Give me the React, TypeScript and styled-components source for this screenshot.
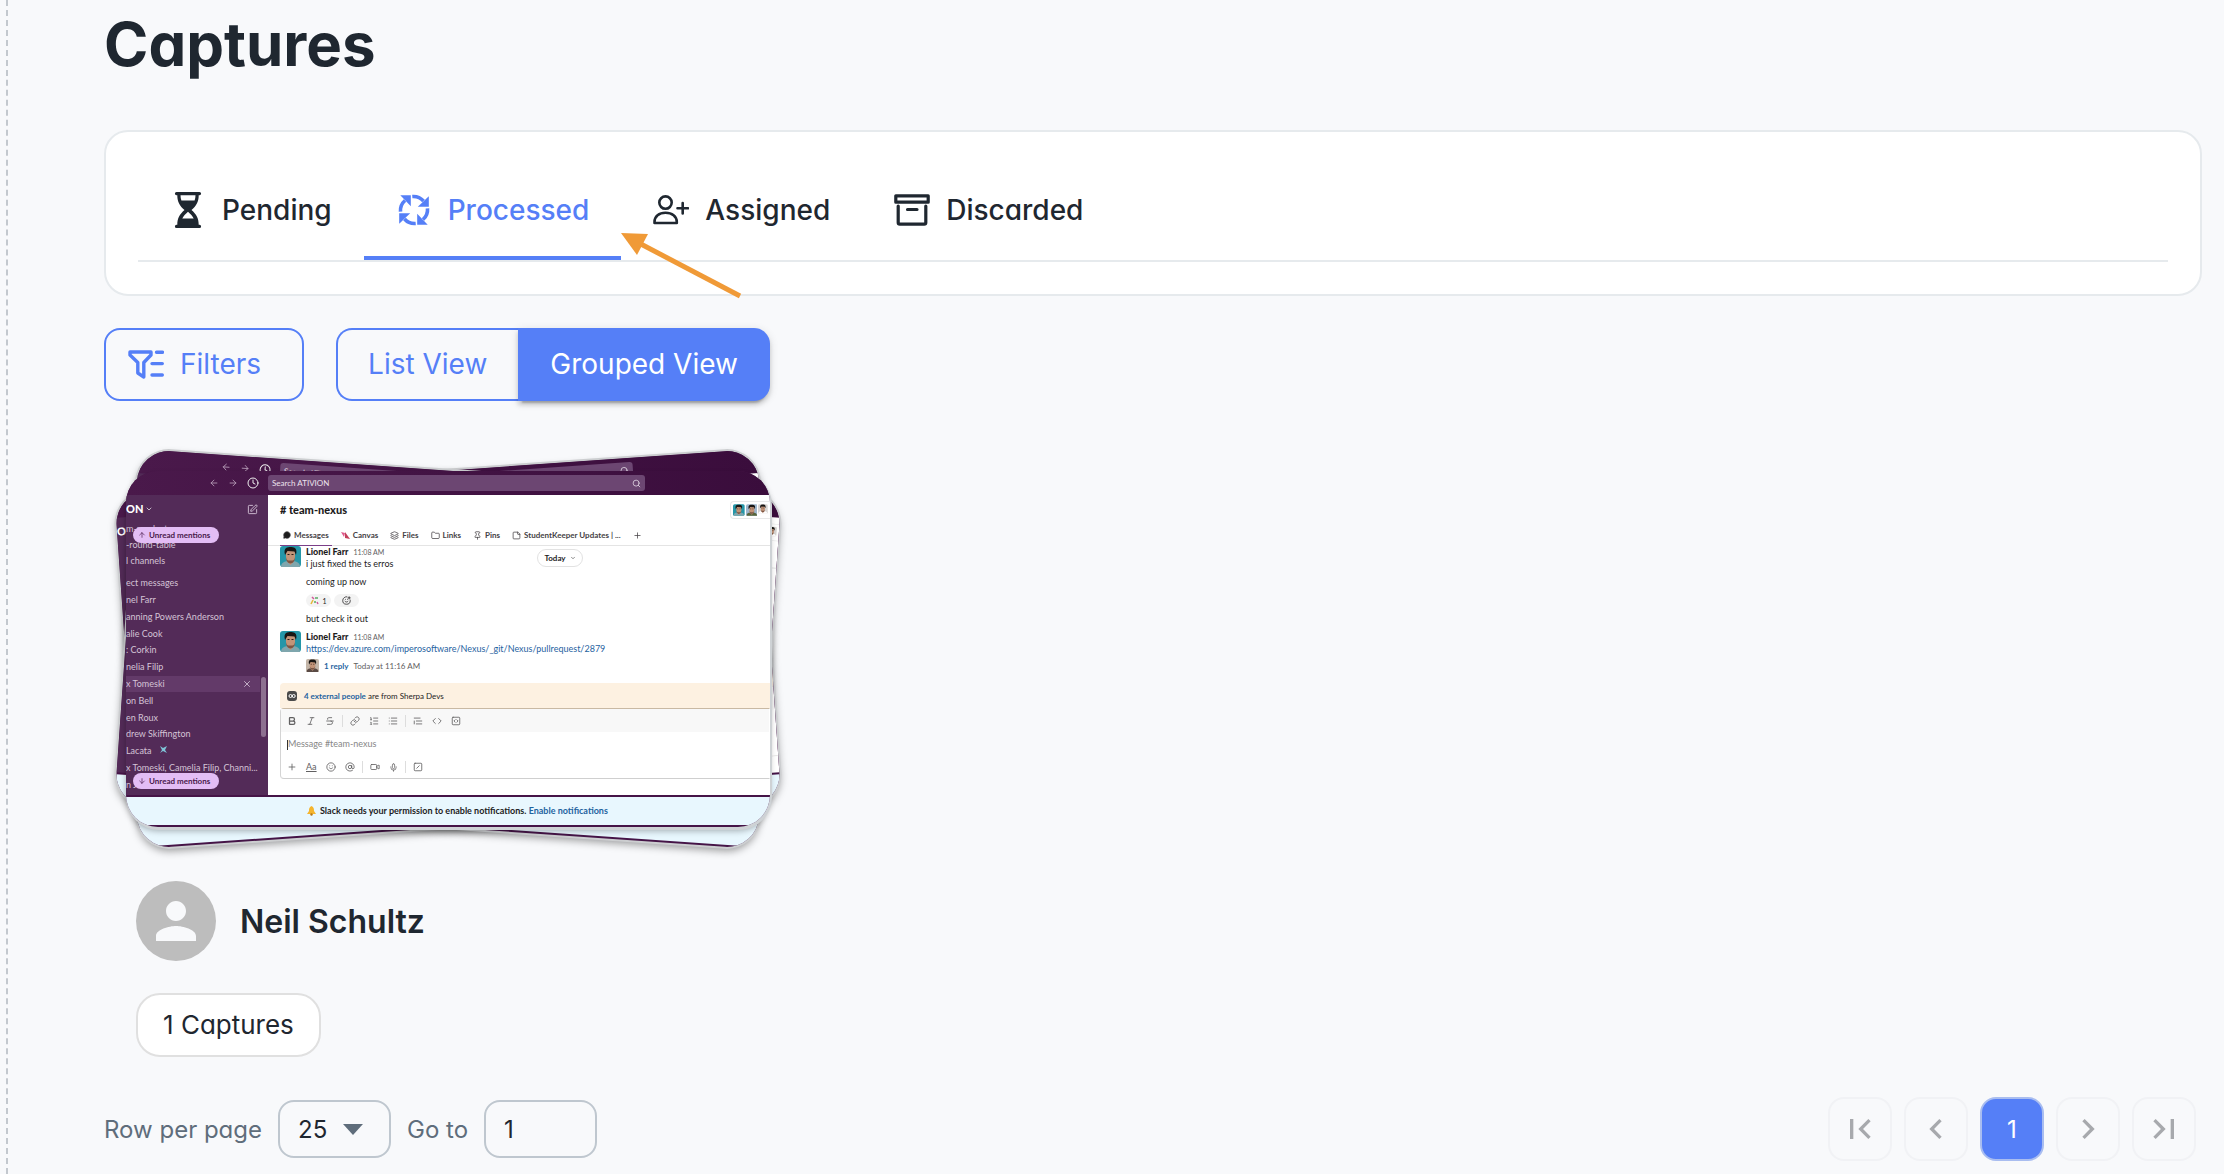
import React from "react";
import styled, { createGlobalStyle, css } from "styled-components";
import { MdPerson, MdFirstPage, MdLastPage, MdChevronLeft, MdChevronRight } from "react-icons/md";
import {
  ArrowLeft, ArrowRight, Clock, Search, SquarePen, ChevronDown, X, Layers, Folder, Pin, StickyNote, Plus,
  SmilePlus, Bold, Italic, Strikethrough, Link, ListOrdered, List, TextQuote, Code, SquareCode, Smile, AtSign,
  Video, Mic, SquareSlash, ArrowUp, ArrowDown, MessageCircle,
} from "lucide-react";

const BLUE = "#557ff7";
const INK = "#1f2730";
const LINE = "#e6eaed";

const Global = createGlobalStyle`
  * { box-sizing: border-box; }
  body { margin: 0; background: #f8f9fb; }
  button, input, select { font: inherit; color: inherit; }
`;

const Page = styled.main`
  min-height: 100vh;
  margin-left: 6px;
  padding: 8px 22px 12px 96px;
  border-left: 2px dashed #c3c8ce;
  color: ${INK};
  font-family: Inter, "Liberation Sans", sans-serif;
  font-feature-settings: "cv11";
  overflow: hidden;
`;

const Title = styled.h1`
  margin: 0 0 50px;
  font-size: 60px;
  line-height: 72px;
  font-weight: 700;
`;

const Card = styled.section`
  position: relative;
  padding: 32px;
  background: #fff;
  border: 2px solid ${LINE};
  border-radius: 24px;
`;

const Tabs = styled.div`
  display: flex;
  border-bottom: 2px solid ${LINE};
`;

const Tab = styled.button<{ $active?: boolean }>`
  display: flex;
  align-items: center;
  gap: 16px;
  height: 96px;
  padding: 0 32px;
  background: none;
  border: 0;
  border-bottom: 4px solid ${(p) => (p.$active ? BLUE : "transparent")};
  color: ${(p) => (p.$active ? BLUE : INK)};
  font-size: 28px;
  font-weight: 500;
`;

const Pointer = styled.svg`
  position: absolute;
  left: 513px;
  top: 97px;
  overflow: visible;
`;

const Toolbar = styled.div`
  display: flex;
  gap: 32px;
  margin-top: 32px;
`;

const outline = css`
  height: 73px;
  border: 2px solid ${BLUE};
  background: transparent;
  color: ${BLUE};
  font-size: 28px;
  font-weight: 400;
`;

const FilterButton = styled.button`
  ${outline}
  display: flex;
  align-items: center;
  gap: 16px;
  padding: 0 41px 2px 22px;
  border-radius: 16px;
`;

const Segments = styled.div`
  display: flex;
`;

const Segment = styled.button<{ $active?: boolean }>`
  ${outline}
  padding: 0 31px 2px 30px;
  border-radius: 16px 0 0 16px;
  border-right: 0;
  ${(p) =>
    p.$active &&
    css`
      padding: 0 32px 2px;
      border: 0;
      border-radius: 0 16px 16px 0;
      background: ${BLUE};
      color: #fff;
      box-shadow: 0 6px 2px -4px rgba(0, 0, 0, 0.2), 0 4px 4px rgba(0, 0, 0, 0.14), 0 2px 10px rgba(0, 0, 0, 0.12);
    `}
`;

const Stack = styled.div`
  position: relative;
  width: 644px;
  height: 356px;
  margin: 70px 0 54px 22px;
`;

const Shot = styled.div<{ $turn?: number }>`
  position: absolute;
  inset: 0;
  overflow: hidden;
  display: flex;
  flex-direction: column;
  border-radius: 32px;
  background: #451447;
  font-family: Lato, "Liberation Sans", sans-serif;
  font-size: 9px;
  line-height: 12px;
  color: #1d1c1d;
  white-space: nowrap;
  box-shadow: ${(p) => (p.$turn ? "0 0 0 2px #ccced0, 0 4px 8px rgba(0,0,0,.4)" : "1px 2px 0 1px #ced2d5, 0 4px 6px rgba(0,0,0,.3)")};
  transform: ${(p) => (p.$turn ? `rotate(${p.$turn}deg)` : "none")};
`;

const TopBar = styled.div`
  display: flex;
  align-items: center;
  height: 24px;
  padding-left: 83px;
  background: linear-gradient(90deg, #4a194b, #3a0d3c);
  color: #b9a0ba;
`;

const NavIcons = styled.div`
  display: flex;
  align-items: center;
  gap: 9px;
  width: 59px;
`;

const SearchBox = styled.div`
  display: flex;
  align-items: center;
  justify-content: space-between;
  width: 377px;
  height: 16px;
  padding: 0 4px;
  border-radius: 3px;
  background: #6c4672;
  color: #ece2ed;
  font-size: 8px;
`;

const Body = styled.div`
  display: flex;
  flex: 1;
  min-height: 0;
`;

const Side = styled.div`
  position: relative;
  flex-shrink: 0;
  width: 142px;
  background: #532b58;
  color: #d4c3d6;
`;

const SideHead = styled.div`
  display: flex;
  align-items: center;
  justify-content: space-between;
  height: 28px;
  padding: 0 10px 0 0;
  color: #fff;
  font-size: 11px;
  font-weight: 900;
`;

const SideName = styled.span`
  display: flex;
  align-items: center;
  gap: 2px;
`;

const Channels = styled.div`
  display: flex;
  flex-direction: column;
  gap: 4px;
  height: 52px;
`;

const People = styled.div`
  display: grid;
  grid-template-columns: minmax(0, 1fr);
  grid-auto-rows: 1fr;
  height: 218px;
`;

const Person = styled.div<{ $active?: boolean }>`
  display: flex;
  align-items: center;
  justify-content: space-between;
  margin-right: 8px;
  padding-right: 8px;
  background: ${(p) => (p.$active ? "#633a69" : "none")};
`;

const Scroll = styled.i`
  position: absolute;
  right: 2px;
  top: 182px;
  width: 5px;
  height: 60px;
  border-radius: 3px;
  background: #8d7090;
`;

const Unread = styled.div<{ $bottom?: boolean }>`
  position: absolute;
  left: 7px;
  ${(p) => (p.$bottom ? "bottom: 6px;" : "top: 32px;")}
  display: flex;
  align-items: center;
  gap: 3px;
  width: 86px;
  height: 16px;
  padding: 0 5px;
  border-radius: 8px;
  background: #e3bdf5;
  color: #48194b;
  font-size: 8px;
  font-weight: 700;
`;

const Main = styled.div`
  display: flex;
  flex-direction: column;
  flex: 1;
  min-width: 0;
  background: #fff;
`;

const MainHead = styled.div`
  display: flex;
  align-items: center;
  justify-content: space-between;
  height: 30px;
  padding-left: 12px;
  font-size: 11px;
  font-weight: 900;
`;

const Members = styled.div`
  display: flex;
  gap: 1px;
  width: 40px;
  padding: 2px;
  border: 1px solid #e8e8e8;
  border-right: 0;
  border-radius: 4px 0 0 4px;
`;

const TabRow = styled.div`
  display: flex;
  gap: 6px;
  height: 21px;
  padding-left: 12px;
  border-bottom: 1px solid #e4e4e4;
  color: #454245;
  font-size: 8px;
  font-weight: 700;
`;

const ShotTab = styled.span<{ $active?: boolean }>`
  display: flex;
  align-items: center;
  gap: 3px;
  height: 21px;
  padding: 0 3px;
  border-bottom: 1px solid ${(p) => (p.$active ? "#7b3f88" : "transparent")};
`;

const Feed = styled.div`
  position: relative;
  flex: 1;
  padding-left: 12px;
`;

const Today = styled.div`
  position: absolute;
  left: 269px;
  top: 3px;
  display: flex;
  align-items: center;
  justify-content: center;
  gap: 4px;
  width: 46px;
  height: 18px;
  border: 1px solid #e2e2e2;
  border-radius: 9px;
  background: #fff;
  font-size: 8px;
  font-weight: 700;
`;

const Message = styled.div`
  display: flex;
  gap: 5px;
`;

const Lines = styled.div`
  display: flex;
  flex-direction: column;
`;

const Author = styled.div`
  height: 12px;
  font-weight: 900;
`;

const Time = styled.span`
  margin-left: 5px;
  color: #616061;
  font-size: 7px;
  font-weight: 400;
`;

const Text = styled.div`
  height: 18px;
`;

const Reactions = styled.div`
  display: flex;
  gap: 3px;
  margin: 0 0 6px;
`;

const Reaction = styled.span`
  display: flex;
  align-items: center;
  justify-content: center;
  gap: 3px;
  width: 25px;
  height: 13px;
  border-radius: 7px;
  background: #f3f3f3;
  font-size: 7px;
`;

const Blue = styled.span`
  color: #1f639f;
`;

const Reply = styled.div`
  display: flex;
  align-items: center;
  gap: 5px;
  margin-top: -2px;
  font-size: 8px;
  color: #616061;
`;

const Notice = styled.div`
  display: flex;
  align-items: center;
  gap: 7px;
  height: 25px;
  margin-left: 12px;
  padding-left: 7px;
  border-radius: 4px 0 0 0;
  background: #fdf1e1;
  font-size: 8px;
`;

const Composer = styled.div`
  height: 71px;
  margin: 0 0 16px 12px;
  border: 1px solid;
  border-color: #c9b9a3 transparent #cfcfcf #d4d4d4;
  border-radius: 4px 0 0 4px;
  color: #616061;
`;

const Tools = styled.div<{ $bar?: boolean }>`
  display: flex;
  align-items: center;
  gap: 9px;
  height: ${(p) => (p.$bar ? 23 : 22)}px;
  padding-left: 6px;
  background: ${(p) => (p.$bar ? "#f8f8f8" : "none")};
`;

const Rule = styled.i`
  width: 1px;
  height: 12px;
  margin: 0 -2px;
  background: #ddd;
`;

const Draft = styled.div`
  height: 24px;
  margin-left: 6px;
  padding: 6px 0 0;
  color: #868686;
`;

const Caret = styled.i`
  display: inline-block;
  width: 1px;
  height: 10px;
  vertical-align: middle;
  background: #333;
`;

const Permission = styled.div`
  display: flex;
  align-items: center;
  gap: 4px;
  height: 28px;
  margin: 2px 0;
  padding-left: 181px;
  background: #e8f7fe;
  font-weight: 700;
  font-size: 9px;
`;

const Owner = styled.div`
  display: flex;
  align-items: center;
  gap: 24px;
  padding-left: 32px;
  font-size: 32px;
  font-weight: 600;
`;

const Avatar = styled.span`
  display: grid;
  place-items: center;
  width: 80px;
  height: 80px;
  border-radius: 50%;
  background: #bdbdbd;
  color: #f8f9fb;
`;

const Count = styled.div`
  display: flex;
  align-items: center;
  width: fit-content;
  height: 64px;
  margin: 32px 0 40px 32px;
  padding: 0 25px 2px;
  border: 2px solid #e0e0e0;
  border-radius: 24px;
  background: #fff;
  font-size: 26px;
`;

const Footer = styled.footer`
  display: flex;
  align-items: center;
  gap: 16px;
  padding-right: 6px;
  color: #5f6d7b;
  font-size: 24px;
`;

const field = css`
  height: 58px;
  border: 2px solid #bfc7cf;
  border-radius: 16px;
  background: transparent;
  color: ${INK};
  outline: 0;
`;

const SelectWrap = styled.span`
  display: grid;
  align-items: center;
  & > * {
    grid-area: 1 / 1;
  }
  & > svg {
    justify-self: end;
    margin-right: 28px;
    pointer-events: none;
  }
`;

const Select = styled.select`
  ${field}
  width: 113px;
  padding: 0 18px;
  appearance: none;
`;

const PageInput = styled.input`
  ${field}
  width: 113px;
  padding: 0 18px;
`;

const Pager = styled.nav`
  display: flex;
  gap: 12px;
  margin-left: auto;
`;

const PageButton = styled.button<{ $active?: boolean }>`
  display: grid;
  place-items: center;
  width: 64px;
  height: 64px;
  padding: 0;
  border: 2px solid ${(p) => (p.$active ? "#a9bdf0" : "#f1f2f5")};
  border-radius: 16px;
  background: ${(p) => (p.$active ? BLUE : "transparent")};
  color: ${(p) => (p.$active ? "#fff" : "#a7a9ad")};
`;

const Hourglass = () => (
  <svg width="36" height="36" viewBox="0 0 36 36">
    <path d="M6.5 0h23a1.6 1.6 0 0 1 0 3.2h-.8c0 6.8-2.4 10.6-7.2 14.8 4.8 4.2 7.2 8 7.2 14.8h.8a1.6 1.6 0 0 1 0 3.200h-23a1.600 1.600 0 0 1 0-3.200h.8c0-6.800 2.400-10.600 7.200-14.800-4.800-4.200-7.200-8-7.200-14.800h-.8a1.600 1.600 0 0 1 0-3.200z" fill="currentColor" />
    <path d="M10.500 3.200h15c0 2-.3 3.800-.9 5.300H11.400c-.6-1.500-.9-3.300-.9-5.300zM18 19.800c2.600 2.200 4.500 4.200 5.700 6.700H12.300c1.200-2.500 3.100-4.500 5.700-6.700z" fill="#fff" />
  </svg>
);

const Cycle = () => (
  <svg width="36" height="36" viewBox="0 0 36 36" fill="currentColor">
    {[0, 90, 180, 270].map((a) => (
      <g key={a} transform={`rotate(${a} 18 18)`}>
        <path d="M16.300 4.500A13.500 13.500 0 0 1 27.500 9" fill="none" stroke="currentColor" strokeWidth="3.600" />
        <path d="M32.800 4.300v10.500h-11z" />
      </g>
    ))}
  </svg>
);

const UserPlus = () => (
  <svg width="36" height="36" viewBox="0 0 36 36" fill="none" stroke="currentColor" strokeWidth="2.600" strokeLinecap="round" strokeLinejoin="round">
    <circle cx="12.500" cy="10.600" r="6.200" />
    <path d="M1.500 31v-1c0-5.500 4.500-9.200 11-9.200s11.300 3.700 11.300 9.200v1zM29.700 11v10.500M24.500 16.200H35" />
  </svg>
);

const Archive = () => (
  <svg width="36" height="36" viewBox="0 0 36 36" fill="none" stroke="currentColor" strokeWidth="3.200" strokeLinecap="round" strokeLinejoin="round">
    <path d="M1.800 3.800h32.400v6.400H1.800zM4.200 14v16.500c0 1 .6 1.600 1.600 1.600h24.400c1 0 1.600-.6 1.600-1.600V14M13.500 17.500h9.500" />
  </svg>
);

const Funnel = () => (
  <svg width="36" height="36" viewBox="0 0 36 36" fill="none" stroke="currentColor" strokeWidth="3.400" strokeLinecap="round" strokeLinejoin="round">
    <path d="M2 6h21v3l-7.200 7.500V31L9.800 27V16.500L2 9z" />
    <path d="M28.500 6.300h6M24 17.600h10.300M24 29h10.300" />
  </svg>
);

const Face = ({ size, bg = "#2596a8", shirt = "#7fa6ad" }: { size: number; bg?: string; shirt?: string }) => (
  <svg width={size} height={size} viewBox="0 0 21 21">
    <rect width="21" height="21" rx="3" fill={bg} />
    <path fill={shirt} d="M1 21c0-5 4-6 9.500-6s9.500 1 9.500 6z" />
    <path fill="#c39478" d="M6 7c0-6 9-6 9 0v4c0 3-1.500 4.500-2 5.500L10.500 19 8 16.500C7.500 15.500 6 14 6 11z" />
    <path fill="#191614" d="M5 9C3 1 8 1 10.500 1S18 1 16 9l-1.500-3.500-7-.5z" />
    <path fill="#7c5644" d="M6 11.500c0 3 2 6 4.500 6s4.500-3 4.500-6c-.5 2-1.500 3-2.500 3h-4c-1 0-2-1-2.500-3z" />
    <path stroke="#2a1a14" strokeWidth="1" d="M7.500 8.500h2m2 0h2" />
  </svg>
);

const Confetti = () => (
  <svg width="9" height="9" viewBox="0 0 9 9" strokeWidth="1.500">
    <path stroke="#e6b93a" d="M1 8l2-4" />
    <path stroke="#d4589b" d="M2 1l2 2m3 3l1 2" />
    <path stroke="#58ab66" d="M5 2h3M4 6h2" />
  </svg>
);

const people = ["nel Farr", "anning Powers Anderson", "alie Cook", ": Corkin", "nelia Filip", "x Tomeski", "on Bell", "en Roux", "drew Skiffington", " Lacata", "x Tomeski, Camelia Filip, Channi...", "n J"];

function Workspace({ turn }: { turn?: number }) {
  const front = !turn;
  return (
    <Shot $turn={turn} aria-hidden={!front}>
      <TopBar>
        <NavIcons>
          <ArrowLeft size={10} />
          <ArrowRight size={10} />
          <Clock size={12} color="#eee" />
        </NavIcons>
        <SearchBox>
          <span>Search ATIVION</span>
          <Search size={9} />
        </SearchBox>
      </TopBar>
      <Body>
        <Side>
          <SideHead>
            <SideName>ON <ChevronDown size={8} /></SideName>
            <SquarePen size={11} color="#d4c3d6" />
          </SideHead>
          {front && (
            <Channels>
              <span>m-product</span>
              <span>-round-table</span>
              <span>l channels</span>
            </Channels>
          )}
          {front && (
            <People>
              <Person>ect messages</Person>
              {people.map((p, i) => (
                <Person key={p} $active={i === 5}>
                  <span>
                    {p}
                    {i === 9 && <svg width="18" height="9" viewBox="0 0 18 9"><path d="M8 1l3 2 4-2-2 4 2 3-4-2-3 2 2-3z" fill="#7fc4d8" /></svg>}
                  </span>
                  {i === 5 && <X size={10} />}
                </Person>
              ))}
            </People>
          )}
          {front && <Scroll />}
          {front && <Unread><ArrowUp size={8} />Unread mentions</Unread>}
          {front && <Unread $bottom><ArrowDown size={8} />Unread mentions</Unread>}
        </Side>
        <Main>
          <MainHead>
            {front ? <span># team-nexus</span> : <span />}
            <Members>
              <Face size={12} />
              <Face size={12} bg="#9fb6cc" shirt="#56643a" />
              <Face size={10} bg="#d7d4d2" shirt="#fff" />
            </Members>
          </MainHead>
          <TabRow>
            {front && (
              <>
                <ShotTab $active><MessageCircle size={8} fill="#1d1c1d" />Messages</ShotTab>
                <ShotTab>
                  <svg width="9" height="9" viewBox="0 0 9 9"><path d="M0 1l4 1-1 4z" fill="#e0598b" /><path d="M4 1l5 7-5-1z" fill="#c2405b" /></svg>
                  Canvas
                </ShotTab>
                <ShotTab><Layers size={9} />Files</ShotTab>
                <ShotTab><Folder size={9} />Links</ShotTab>
                <ShotTab><Pin size={9} />Pins</ShotTab>
                <ShotTab><StickyNote size={9} />StudentKeeper Updates | ...</ShotTab>
                <ShotTab><Plus size={9} /></ShotTab>
              </>
            )}
          </TabRow>
          <Feed>
            {front && (
              <>
                <Message>
                  <Face size={21} />
                  <Lines>
                    <Author>Lionel Farr<Time>11:08 AM</Time></Author>
                    <Text>i just fixed the ts erros</Text>
                    <Text>coming up now</Text>
                    <Reactions>
                      <Reaction><Confetti />1</Reaction>
                      <Reaction><SmilePlus size={9} /></Reaction>
                    </Reactions>
                    <Text>but check it out</Text>
                  </Lines>
                </Message>
                <Message>
                  <Face size={21} />
                  <Lines>
                    <Author>Lionel Farr<Time>11:08 AM</Time></Author>
                    <Text><Blue>https://dev.azure.com/imperosoftware/Nexus/_git/Nexus/pullrequest/2879</Blue></Text>
                    <Reply>
                      <Face size={13} bg="#c3b5a8" shirt="#5a4a44" />
                      <Blue><b>1 reply</b></Blue>
                      <span>Today at 11:16 AM</span>
                    </Reply>
                  </Lines>
                </Message>
                <Today>Today <ChevronDown size={6} /></Today>
              </>
            )}
          </Feed>
          <Notice>
            {front && (
              <>
                <svg width="10" height="10" viewBox="0 0 10 10"><rect width="10" height="10" rx="3" fill="#4a4a4a" /><circle cx="3.500" cy="5" r="1.500" fill="none" stroke="#fff" /><circle cx="6.700" cy="5" r="1.500" fill="none" stroke="#fff" /></svg>
                <span><Blue><b>4 external people</b></Blue> are from Sherpa Devs</span>
              </>
            )}
          </Notice>
          <Composer>
            <Tools $bar>
              {front && (
                <>
                  <Bold size={10} strokeWidth={3} /><Italic size={10} /><Strikethrough size={10} /><Rule />
                  <Link size={10} /><ListOrdered size={10} /><List size={10} /><Rule />
                  <TextQuote size={10} /><Code size={10} /><SquareCode size={10} />
                </>
              )}
            </Tools>
            <Draft>{front && <><Caret />Message #team-nexus</>}</Draft>
            <Tools>
              {front && (
                <>
                  <Plus size={10} /><u>Aa</u><Smile size={10} /><AtSign size={10} /><Rule />
                  <Video size={10} /><Mic size={9} /><Rule /><SquareSlash size={10} />
                </>
              )}
            </Tools>
          </Composer>
        </Main>
      </Body>
      <Permission>
        {front && (
          <>
            <svg width="9" height="10" viewBox="0 0 9 10"><path d="M4.500 0C7 1 7 3 7 5l2 3H0l2-3c0-2 0-4 2.500-5z" fill="#f5b52e" /><circle cx="4.500" cy="8.500" r="1.200" fill="#b97711" /></svg>
            <span>Slack needs your permission to enable notifications. <Blue>Enable notifications</Blue></span>
          </>
        )}
      </Permission>
    </Shot>
  );
}

export default function App() {
  return (
    <Page>
      <Global />
      <Title>Captures</Title>
      <Card>
        <Tabs role="tablist">
          <Tab role="tab"><Hourglass />Pending</Tab>
          <Tab role="tab" $active aria-selected><Cycle />Processed</Tab>
          <Tab role="tab"><UserPlus />Assigned</Tab>
          <Tab role="tab"><Archive />Discarded</Tab>
        </Tabs>
        <Pointer width="122" height="68" viewBox="0 0 122 68" aria-hidden>
          <path d="M18 13L121 67" stroke="#f09a37" strokeWidth="5" />
          <path d="M2 4l27 1-11 21z" fill="#f09a37" />
        </Pointer>
      </Card>
      <Toolbar>
        <FilterButton><Funnel />Filters</FilterButton>
        <Segments>
          <Segment>List View</Segment>
          <Segment $active>Grouped View</Segment>
        </Segments>
      </Toolbar>
      <Stack>
        <Workspace turn={-4} />
        <Workspace turn={4} />
        <Workspace />
      </Stack>
      <Owner>
        <Avatar><MdPerson size={60} /></Avatar>
        <span>Neil Schultz</span>
      </Owner>
      <Count>1 Captures</Count>
      <Footer>
        <label htmlFor="rows">Row per page</label>
        <SelectWrap>
          <Select id="rows" defaultValue="25">
            <option>25</option>
            <option>50</option>
          </Select>
          <svg width="20" height="11" viewBox="0 0 20 11"><path d="M0 0h20L10 11z" fill="#5f6d7b" /></svg>
        </SelectWrap>
        <label htmlFor="goto">Go to</label>
        <PageInput id="goto" defaultValue="1" />
        <Pager aria-label="Pages">
          <PageButton aria-label="First page"><MdFirstPage size={40} /></PageButton>
          <PageButton aria-label="Previous page"><MdChevronLeft size={40} /></PageButton>
          <PageButton $active>1</PageButton>
          <PageButton aria-label="Next page"><MdChevronRight size={40} /></PageButton>
          <PageButton aria-label="Last page"><MdLastPage size={40} /></PageButton>
        </Pager>
      </Footer>
    </Page>
  );
}
